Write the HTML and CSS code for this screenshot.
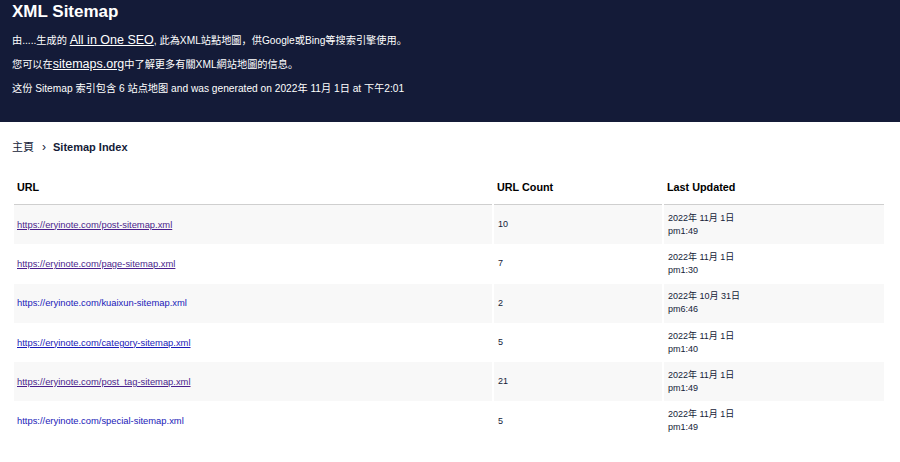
FILE: index.html
```
<!DOCTYPE html>
<html lang="zh">
<head>
<meta charset="utf-8">
<title>XML Sitemap</title>
<link rel="stylesheet" href="styles.css">
</head>
<body>
<header class="site-header">
  <h1 class="title">XML Sitemap</h1>
  <p class="desc">由.....生成的 <a class="hlink" href="#">All in One SEO</a>, 此為XML站點地圖，供Google或Bing等搜索引擎使用。</p>
  <p class="desc">您可以在<a class="hlink" href="#">sitemaps.org</a>中了解更多有關XML網站地圖的信息。</p>
  <p class="desc">这份 Sitemap 索引包含 6 站点地图 and was generated on 2022年 11月 1日 at 下午2:01</p>
</header>
<main class="content">
  <nav class="crumbs"><span class="crumb-home">主頁</span><span class="crumb-sep">›</span><span class="crumb-current">Sitemap Index</span></nav>
  <table class="sitemap">
    <colgroup><col class="c-url"><col class="c-count"><col class="c-date"></colgroup>
    <thead>
      <tr><th>URL</th><th>URL Count</th><th>Last Updated</th></tr>
    </thead>
    <tbody>
      <tr class="odd"><td><a class="visited" href="#">https://eryinote.com/post-sitemap.xml</a></td><td>10</td><td>2022年 11月 1日<br>pm1:49</td></tr>
      <tr><td><a class="visited" href="#">https://eryinote.com/page-sitemap.xml</a></td><td>7</td><td>2022年 11月 1日<br>pm1:30</td></tr>
      <tr class="odd"><td><a class="plain" href="#">https://eryinote.com/kuaixun-sitemap.xml</a></td><td>2</td><td>2022年 10月 31日<br>pm6:46</td></tr>
      <tr><td><a class="blue" href="#">https://eryinote.com/category-sitemap.xml</a></td><td>5</td><td>2022年 11月 1日<br>pm1:40</td></tr>
      <tr class="odd"><td><a class="visited" href="#">https://eryinote.com/post_tag-sitemap.xml</a></td><td>21</td><td>2022年 11月 1日<br>pm1:49</td></tr>
      <tr><td><a class="plain" href="#">https://eryinote.com/special-sitemap.xml</a></td><td>5</td><td>2022年 11月 1日<br>pm1:49</td></tr>
    </tbody>
  </table>
</main>
</body>
</html>
```
FILE: styles.css
```
html, body {
  margin: 0;
  padding: 0;
  background: #ffffff;
  font-family: "Liberation Sans", Arial, "Noto Sans CJK SC", sans-serif;
  color: #141b38;
}

.site-header {
  background: #141b38;
  color: #ffffff;
  height: 122px;
  box-sizing: border-box;
  padding: 0 12px;
  overflow: hidden;
}

.title {
  margin: 0;
  font-size: 17px;
  line-height: 23px;
  font-weight: bold;
}

.desc {
  margin: 9px 0 0;
  font-size: 10.2px;
  line-height: 15px;
}

.desc:first-of-type {
  margin-top: 10px;
}

.hlink {
  color: #ffffff;
  text-decoration: underline;
  font-size: 12.5px;
}

.content {
  padding: 0 12px;
}

.crumbs {
  display: flex;
  align-items: center;
  height: 16px;
  margin-top: 17px;
  font-size: 11px;
  line-height: 16px;
  color: #141b38;
}

.crumb-sep {
  margin: 0 7px 0 8px;
  font-size: 12px;
}

.crumb-current {
  font-weight: bold;
}

.sitemap {
  margin-top: 15px;
  margin-left: 0;
  border-collapse: separate;
  border-spacing: 2px 0;
  width: 874px;
  table-layout: fixed;
}

.c-url { width: 478px; }
.c-count { width: 168px; }
.c-date { width: 220px; }

.sitemap th {
  text-align: left;
  font-size: 10.8px;
  font-weight: bold;
  color: #000000;
  height: 34px;
  padding: 0 3px;
  border-bottom: 1px solid #cfcfcf;
  vertical-align: middle;
}

.sitemap td {
  font-size: 9px;
  line-height: 13px;
  color: #141b38;
  height: 39.3px;
  padding: 0 4px;
  vertical-align: middle;
}

.sitemap td:first-child {
  padding-left: 3px;
}

.sitemap tr.odd td {
  background: #f8f8f8;
}

.sitemap a {
  font-size: 9.4px;
}

.visited {
  color: #4b1f8c;
  text-decoration: underline;
}

.blue {
  color: #1a1ab8;
  text-decoration: underline;
}

.plain {
  color: #1a1ab8;
  text-decoration: none;
}
```
